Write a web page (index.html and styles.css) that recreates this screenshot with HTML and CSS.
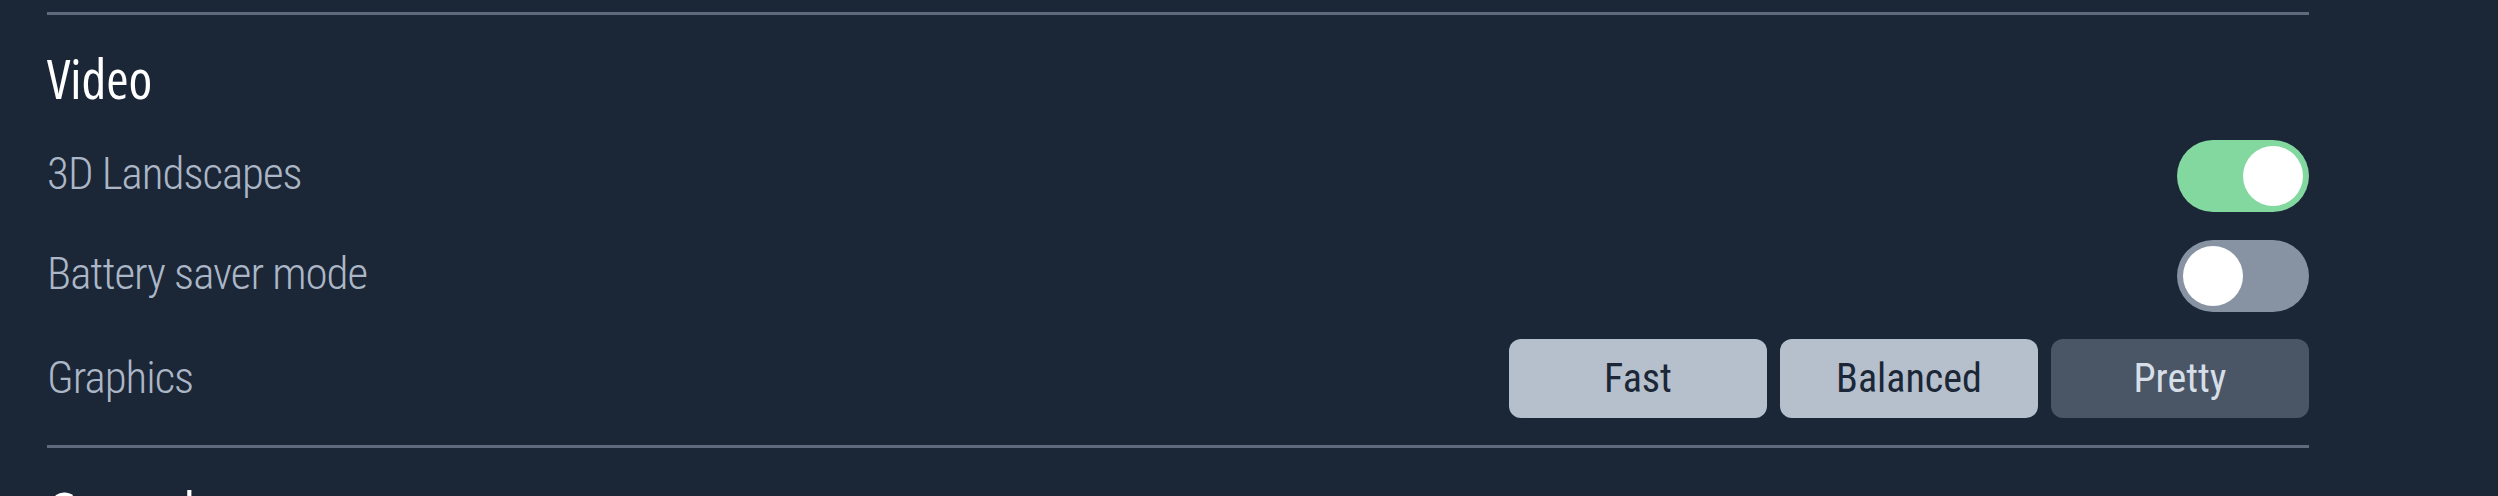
FILE: index.html
```html
<!DOCTYPE html>
<html lang="en">
<head>
<meta charset="utf-8">
<title>Settings</title>
<link rel="stylesheet" href="styles.css">
</head>
<body>
<div class="page">
  <section class="section">
    <h2 class="section-title">Video</h2>
    <div class="rows">
      <div class="row row-toggle">
        <span class="label">3D Landscapes</span>
        <span class="switch switch-on"><span class="knob"></span></span>
      </div>
      <div class="row row-toggle">
        <span class="label">Battery saver mode</span>
        <span class="switch switch-off"><span class="knob"></span></span>
      </div>
      <div class="row row-choice">
        <span class="label">Graphics</span>
        <div class="choices">
          <button class="choice">Fast</button>
          <button class="choice">Balanced</button>
          <button class="choice choice-active">Pretty</button>
        </div>
      </div>
    </div>
  </section>
  <section class="section">
    <h2 class="section-title">General</h2>
  </section>
</div>
</body>
</html>
```

FILE: styles.css
```css
html, body {
  margin: 0;
  padding: 0;
  background: #1b2637;
}

body {
  font-family: "Roboto", "Open Sans", "DejaVu Sans Condensed", sans-serif;
  font-stretch: 75%;
  height: 496px;
  overflow: hidden;
}

.page {
  padding: 12px 0 0 47px;
  width: 2262px;
}

.section {
  border-top: 3px solid #5f6b7d;
  padding-top: 33px;
  padding-bottom: 27px;
}

.section-title {
  margin: 0 0 32px 0;
  font-family: "Open Sans", "Roboto", sans-serif;
  font-size: 54px;
  line-height: 60px;
  font-weight: 500;
  color: #ffffff;
}

.rows {
  display: flex;
  flex-direction: column;
  gap: 28px;
}

.row {
  display: flex;
  align-items: center;
  justify-content: space-between;
}

.row-toggle {
  height: 72px;
}

.row-toggle .label {
  padding-bottom: 6px;
}

.row-choice {
  height: 79px;
  margin-top: -1px;
}

.row-choice .label {
  padding-bottom: 2px;
}

.label {
  font-size: 45px;
  letter-spacing: -1px;
  font-weight: 300;
  color: #abb7c6;
  line-height: 1;
}

.switch {
  width: 132px;
  height: 72px;
  border-radius: 36px;
  padding: 6px;
  box-sizing: border-box;
  display: flex;
  align-items: center;
}

.switch-on {
  background: #83d89f;
  justify-content: flex-end;
}

.switch-off {
  background: #8792a3;
  justify-content: flex-start;
}

.knob {
  width: 60px;
  height: 60px;
  border-radius: 50%;
  background: #ffffff;
}

.choices {
  display: flex;
  gap: 13px;
}

.choice {
  width: 258px;
  height: 79px;
  border: none;
  border-radius: 12px;
  background: #b5c0cc;
  color: #1b2637;
  font-family: inherit;
  font-stretch: 75%;
  font-weight: 400;
  font-size: 40px;
  padding: 0;
  line-height: 1;
}

.choice-active {
  background: #4a5566;
  color: #d6dee8;
}
```
